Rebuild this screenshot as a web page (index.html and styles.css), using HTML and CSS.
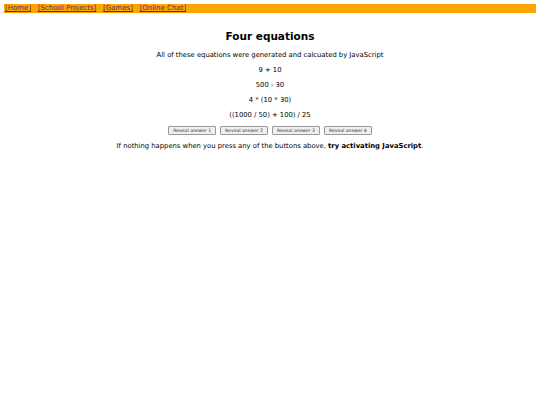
FILE: index.html
```html
<!DOCTYPE html>
<html>
<head>
<meta charset="utf-8">
<title>Four equations</title>
<link rel="stylesheet" href="styles.css">
</head>
<body>
<div class="nav">
<a href="#">[Home]</a> <a href="#">[School Projects]</a> <a href="#">[Games]</a> <a href="#">[Online Chat]</a>
</div>
<div class="main">
<h1 class="title">Four equations</h1>
<p class="line">All of these equations were generated and calcuated by JavaScript</p>
<p class="line">9 + 10</p>
<p class="line">500 - 30</p>
<p class="line">4 * (10 * 30)</p>
<p class="line">((1000 / 50) + 100) / 25</p>
<div class="buttons">
<button class="btn">Reveal answer 1</button>
<button class="btn">Reveal answer 2</button>
<button class="btn">Reveal answer 3</button>
<button class="btn">Reveal answer 4</button>
</div>
<p class="line">If nothing happens when you press any of the buttons above, <b>try activating JavaScript</b>.</p>
</div>
</body>
</html>
```
FILE: styles.css
```css
body {
  margin: 4px 4px;
  font-family: "DejaVu Sans", Verdana, sans-serif;
  font-size: 6.8px;
  color: #000;
  background: #fff;
}
.nav {
  background: #ffa500;
  height: 9px;
  line-height: 9px;
  font-size: 7px;
  padding-left: 1px;
}
.nav a {
  color: #5a2a6a;
  text-decoration: underline;
  margin-right: 4.4px;
}
.main {
  text-align: center;
}
.title {
  font-size: 10.5px;
  margin: 16px 0 8px;
  line-height: 14px;
}
.line {
  margin: 7px 0;
  line-height: 8px;
}
.buttons {
  display: flex;
  justify-content: center;
  gap: 4px;
  margin: 6px 0;
}
.btn {
  font-family: "DejaVu Sans", Verdana, sans-serif;
  font-size: 4.6px;
  height: 9px;
  padding: 0 4px;
  background: #efefef;
  border: 1px solid #999;
  border-radius: 1px;
  color: #333;
  line-height: 7px;
}
```
